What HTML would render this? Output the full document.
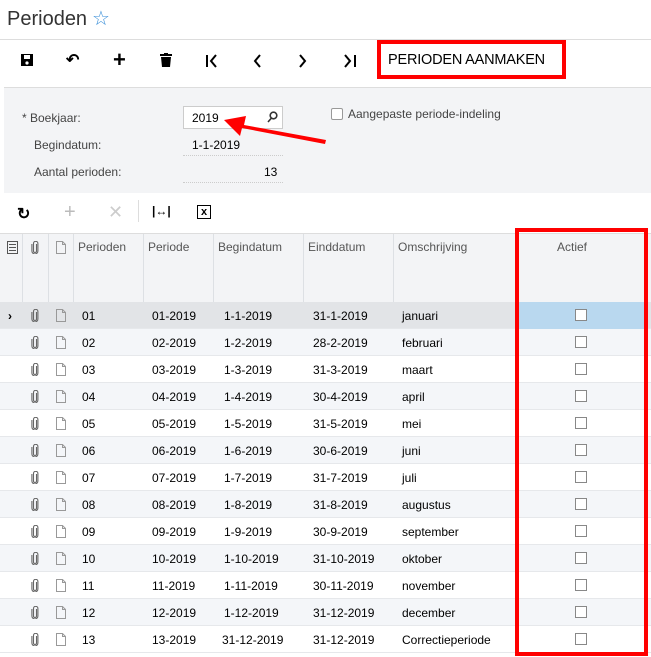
<!DOCTYPE html>
<html><head><style>
*{margin:0;padding:0;box-sizing:border-box}
body{width:651px;height:657px;overflow:hidden;background:#fff;font-family:"Liberation Sans",Arial,sans-serif;position:relative;color:#000}
.a{position:absolute}
.t{font-size:12px}
.ic{position:absolute;font-size:18px;font-weight:bold;top:50px}
.row{position:absolute;left:0;width:651px;height:27px;border-bottom:1px solid #e6e8eb;font-size:12px}
.row span{position:absolute;top:7px}
.row .pc{position:absolute;left:31px;top:7px}
.row .pg{position:absolute;left:56px;top:7px}
.cb{position:absolute;left:575px;top:7px;width:12px;height:12px;border:1px solid #888;background:#fff}
.hd{position:absolute;top:240px;font-size:12px;color:#555}
.vl{position:absolute;top:234px;height:68px;width:1px;background:#dde0e4}
</style></head><body>
<svg width="0" height="0" style="position:absolute"><defs>
<symbol id="clip" viewBox="0 0 8 13"><path d="M5.5 3v7a1.5 1.5 0 0 1-3 0V2.5a2.2 2.2 0 0 1 4.4 0V10a3 3 0 0 1-6 0V3" fill="none" stroke="#666" stroke-width="1.1"/></symbol>
<symbol id="page" viewBox="0 0 10 13"><path d="M.5.5h6l3 3v9h-9z M6.5.5v3h3" fill="none" stroke="#999" stroke-width="1"/></symbol>
</defs></svg>
<div class="a" style="left:7px;top:8px;font-size:20px;color:#333">Perioden</div>
<div class="a" style="left:92px;top:6px;font-size:20px;color:#3a8fd8">☆</div>
<div class="a" style="left:0;top:39px;width:651px;height:1px;background:#ddd"></div>
<svg class="a" style="left:20px;top:53px" width="14" height="14"><rect x="1" y="1" width="12" height="12" fill="#000"/><rect x="4" y="2" width="6" height="4" fill="#fff"/><circle cx="7" cy="10" r="1.6" fill="#fff"/></svg>
<div class="ic" style="left:66px;top:50px;font-size:16px">↶</div>
<div class="ic" style="left:113px;top:47px;font-size:22px">+</div>
<svg class="a" style="left:160px;top:53px" width="12" height="14"><rect x="0" y="1" width="12" height="2" fill="#000"/><rect x="4" y="0" width="4" height="2" fill="#000"/><path d="M1 4h10l-1 10H2z" fill="#000"/></svg>
<svg class="a" style="left:205px;top:54px" width="14" height="14" fill="none" stroke="#000" stroke-width="2"><path d="M2 1v12M11 1L6 7l5 6"/></svg>
<svg class="a" style="left:252px;top:54px" width="10" height="14" fill="none" stroke="#000" stroke-width="2"><path d="M8 1L3 7l5 6"/></svg>
<svg class="a" style="left:298px;top:54px" width="10" height="14" fill="none" stroke="#000" stroke-width="2"><path d="M2 1l5 6-5 6"/></svg>
<svg class="a" style="left:343px;top:54px" width="14" height="14" fill="none" stroke="#000" stroke-width="2"><path d="M2 1l5 6-5 6M12 1v12"/></svg>
<div class="a" style="left:377px;top:40px;width:189px;height:39px;border:4px solid #f00"></div>
<div class="a" style="left:388px;top:52px;font-size:14.5px;letter-spacing:-0.2px">PERIODEN AANMAKEN</div>
<div class="a" style="left:4px;top:87px;width:647px;height:106px;background:#f3f4f6;border-top:1px solid #ddd"></div>
<div class="a t" style="left:22px;top:111px;color:#444">* Boekjaar:</div>
<div class="a t" style="left:34px;top:138px;color:#444">Begindatum:</div>
<div class="a t" style="left:34px;top:165px;color:#444">Aantal perioden:</div>
<div class="a" style="left:183px;top:106px;width:100px;height:23px;border:1px solid #ccc;background:#fff"></div>
<div class="a t" style="left:192px;top:111px">2019</div>
<svg class="a" style="left:267px;top:111px" width="11" height="12" fill="none" stroke="#333" stroke-width="1.6"><circle cx="6.5" cy="4.5" r="3.3"/><path d="M4.5 7L1 11"/></svg>
<div class="a t" style="left:192px;top:138px">1-1-2019</div>
<div class="a" style="left:183px;top:155px;width:100px;border-top:1px dotted #ccc"></div>
<div class="a t" style="left:264px;top:165px">13</div>
<div class="a" style="left:183px;top:182px;width:100px;border-top:1px dotted #ccc"></div>
<div class="a" style="left:331px;top:108px;width:12px;height:12px;border:1px solid #999;background:#fff;border-radius:2px"></div>
<div class="a t" style="left:348px;top:107px;color:#444">Aangepaste periode-indeling</div>
<svg class="a" style="left:180px;top:108px" width="152" height="40"><path d="M146 32L64 17l2-9L44 12l16 16 2-8 83 16z" fill="#f00"/></svg>
<div class="a" style="left:17px;top:204px;font-size:16px;font-weight:bold">↻</div>
<div class="a" style="left:64px;top:201px;font-size:20px;color:#bbb">+</div>
<div class="a" style="left:108px;top:202px;font-size:18px;color:#ccc">✕</div>
<div class="a" style="left:138px;top:200px;width:1px;height:22px;background:#ddd"></div>
<div class="a" style="left:152px;top:204px;font-size:12px;font-weight:bold">|↔|</div>
<div class="a" style="left:197px;top:205px;width:14px;height:14px;border:1px solid #000;font-size:11px;font-weight:bold;text-align:center;line-height:12px">x</div>
<div class="a" style="left:0;top:233px;width:651px;height:69px;background:#f3f4f6;border-top:1px solid #ddd"></div>
<div class="vl" style="left:22px"></div><div class="vl" style="left:48px"></div><div class="vl" style="left:73px"></div><div class="vl" style="left:143px"></div><div class="vl" style="left:213px"></div><div class="vl" style="left:303px"></div><div class="vl" style="left:393px"></div>
<svg class="a" style="left:7px;top:241px" width="11" height="13" fill="none" stroke="#555"><rect x=".5" y=".5" width="10" height="12"/><path d="M2 3.5h7M2 6.5h7M2 9.5h7"/></svg>
<svg class="a" style="left:31px;top:241px" width="8" height="13"><use href="#clip"/></svg>
<svg class="a" style="left:56px;top:241px" width="10" height="13"><use href="#page"/></svg>
<div class="hd" style="left:78px;width:62px;overflow:hidden;white-space:nowrap">Perioden</div>
<div class="hd" style="left:148px">Periode</div>
<div class="hd" style="left:218px;width:82px;overflow:hidden;white-space:nowrap">Begindatum</div>
<div class="hd" style="left:308px">Einddatum</div>
<div class="hd" style="left:398px">Omschrijving</div>
<div class="hd" style="left:557px">Actief</div>
<div class="row" style="top:302px;background:#e2e4e7"><span style="left:8px;font-weight:bold">›</span><svg class="pc" width="8" height="13"><use href="#clip"/></svg><svg class="pg" width="10" height="13"><use href="#page"/></svg><span style="left:82px">01</span><span style="left:152px">01-2019</span><span style="left:224px">1-1-2019</span><span style="left:313px">31-1-2019</span><span style="left:402px">januari</span><div class="a" style="left:519px;top:0;width:128px;height:27px;background:#b9d8ef"></div><div class="cb"></div></div>
<div class="row" style="top:329px;background:#f4f6f9"><svg class="pc" width="8" height="13"><use href="#clip"/></svg><svg class="pg" width="10" height="13"><use href="#page"/></svg><span style="left:82px">02</span><span style="left:152px">02-2019</span><span style="left:224px">1-2-2019</span><span style="left:313px">28-2-2019</span><span style="left:402px">februari</span><div class="cb"></div></div>
<div class="row" style="top:356px"><svg class="pc" width="8" height="13"><use href="#clip"/></svg><svg class="pg" width="10" height="13"><use href="#page"/></svg><span style="left:82px">03</span><span style="left:152px">03-2019</span><span style="left:224px">1-3-2019</span><span style="left:313px">31-3-2019</span><span style="left:402px">maart</span><div class="cb"></div></div>
<div class="row" style="top:383px;background:#f4f6f9"><svg class="pc" width="8" height="13"><use href="#clip"/></svg><svg class="pg" width="10" height="13"><use href="#page"/></svg><span style="left:82px">04</span><span style="left:152px">04-2019</span><span style="left:224px">1-4-2019</span><span style="left:313px">30-4-2019</span><span style="left:402px">april</span><div class="cb"></div></div>
<div class="row" style="top:410px"><svg class="pc" width="8" height="13"><use href="#clip"/></svg><svg class="pg" width="10" height="13"><use href="#page"/></svg><span style="left:82px">05</span><span style="left:152px">05-2019</span><span style="left:224px">1-5-2019</span><span style="left:313px">31-5-2019</span><span style="left:402px">mei</span><div class="cb"></div></div>
<div class="row" style="top:437px;background:#f4f6f9"><svg class="pc" width="8" height="13"><use href="#clip"/></svg><svg class="pg" width="10" height="13"><use href="#page"/></svg><span style="left:82px">06</span><span style="left:152px">06-2019</span><span style="left:224px">1-6-2019</span><span style="left:313px">30-6-2019</span><span style="left:402px">juni</span><div class="cb"></div></div>
<div class="row" style="top:464px"><svg class="pc" width="8" height="13"><use href="#clip"/></svg><svg class="pg" width="10" height="13"><use href="#page"/></svg><span style="left:82px">07</span><span style="left:152px">07-2019</span><span style="left:224px">1-7-2019</span><span style="left:313px">31-7-2019</span><span style="left:402px">juli</span><div class="cb"></div></div>
<div class="row" style="top:491px;background:#f4f6f9"><svg class="pc" width="8" height="13"><use href="#clip"/></svg><svg class="pg" width="10" height="13"><use href="#page"/></svg><span style="left:82px">08</span><span style="left:152px">08-2019</span><span style="left:224px">1-8-2019</span><span style="left:313px">31-8-2019</span><span style="left:402px">augustus</span><div class="cb"></div></div>
<div class="row" style="top:518px"><svg class="pc" width="8" height="13"><use href="#clip"/></svg><svg class="pg" width="10" height="13"><use href="#page"/></svg><span style="left:82px">09</span><span style="left:152px">09-2019</span><span style="left:224px">1-9-2019</span><span style="left:313px">30-9-2019</span><span style="left:402px">september</span><div class="cb"></div></div>
<div class="row" style="top:545px;background:#f4f6f9"><svg class="pc" width="8" height="13"><use href="#clip"/></svg><svg class="pg" width="10" height="13"><use href="#page"/></svg><span style="left:82px">10</span><span style="left:152px">10-2019</span><span style="left:224px">1-10-2019</span><span style="left:313px">31-10-2019</span><span style="left:402px">oktober</span><div class="cb"></div></div>
<div class="row" style="top:572px"><svg class="pc" width="8" height="13"><use href="#clip"/></svg><svg class="pg" width="10" height="13"><use href="#page"/></svg><span style="left:82px">11</span><span style="left:152px">11-2019</span><span style="left:224px">1-11-2019</span><span style="left:313px">30-11-2019</span><span style="left:402px">november</span><div class="cb"></div></div>
<div class="row" style="top:599px;background:#f4f6f9"><svg class="pc" width="8" height="13"><use href="#clip"/></svg><svg class="pg" width="10" height="13"><use href="#page"/></svg><span style="left:82px">12</span><span style="left:152px">12-2019</span><span style="left:224px">1-12-2019</span><span style="left:313px">31-12-2019</span><span style="left:402px">december</span><div class="cb"></div></div>
<div class="row" style="top:626px"><svg class="pc" width="8" height="13"><use href="#clip"/></svg><svg class="pg" width="10" height="13"><use href="#page"/></svg><span style="left:82px">13</span><span style="left:152px">13-2019</span><span style="left:222px">31-12-2019</span><span style="left:313px">31-12-2019</span><span style="left:402px">Correctieperiode</span><div class="cb"></div></div>
<div class="a" style="left:515px;top:228px;width:133px;height:428px;border:4px solid #f00"></div>
</body></html>
